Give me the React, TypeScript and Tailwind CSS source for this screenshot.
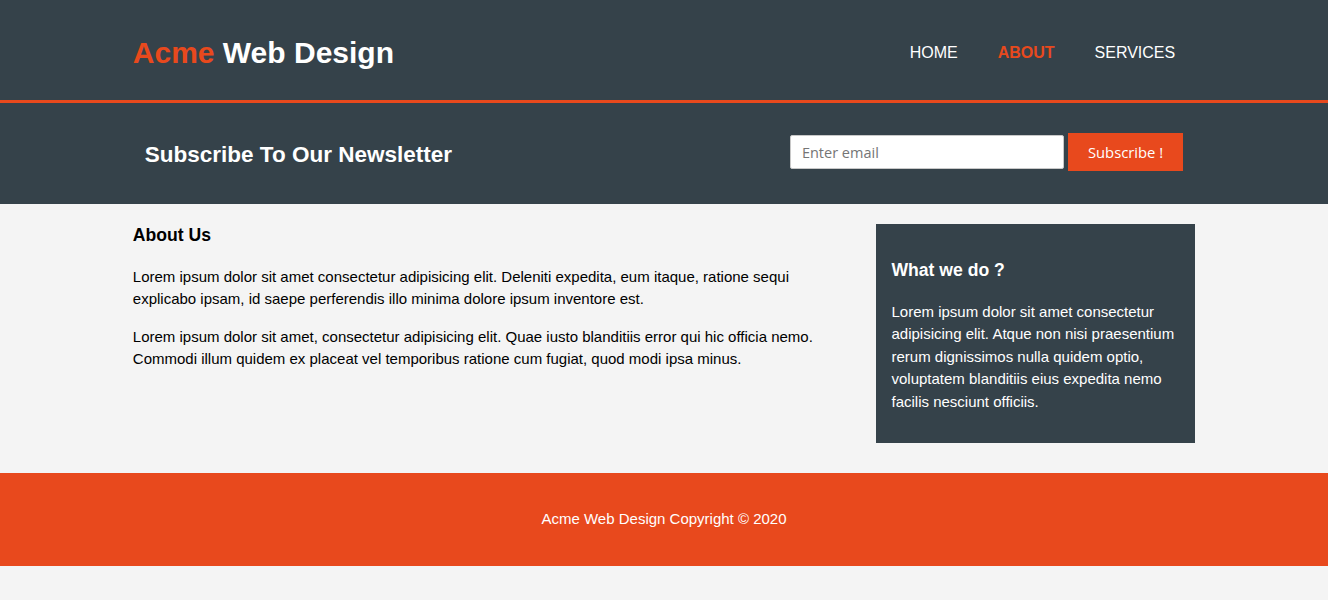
import React from "react";

const sans = { fontFamily: '"Liberation Sans", Arial, sans-serif' };
const formFont = { fontFamily: '"Open Sans", "Noto Sans", sans-serif' };

export default function App() {
  return (
    <div className="min-h-[600px] bg-[#f4f4f4] text-[15px] leading-[1.5] text-black" style={sans}>
      <header className="bg-[#35424a] pt-[30px] h-[103px] border-b-[3px] border-[#e8491d] text-white">
        <div className="w-[80%] mx-auto flex justify-between items-start">
          <h1 className="m-0 text-[30px] font-bold leading-[45px]">
            <span className="text-[#e8491d]">Acme</span> Web Design
          </h1>
          <nav className="mt-[11px]">
            <ul className="flex m-0 p-0">
              <li className="px-5 text-[16px] leading-6 uppercase">HOME</li>
              <li className="px-5 text-[16px] leading-6 uppercase font-bold text-[#e8491d]">ABOUT</li>
              <li className="px-5 text-[16px] leading-6 uppercase">SERVICES</li>
            </ul>
          </nav>
        </div>
      </header>

      <section className="bg-[#35424a] p-[15px] text-white">
        <div className="w-[80%] mx-auto flex justify-between items-start">
          <h1 className="mt-[19.8px] mb-[17.4px] text-[22.5px] font-bold leading-[33.6px]">Subscribe To Our Newsletter</h1>
          <form className="mt-[15px] flex items-center gap-[4px]" onSubmit={(e) => e.preventDefault()}>
            <input
              type="email"
              placeholder="Enter email"
              className="w-[274px] h-[34px] bg-white border border-[#c8c8c8] rounded-[2px] pl-[11px] text-[14.5px] text-black placeholder:text-[#757575] outline-none"
              style={formFont}
            />
            <button
              type="submit"
              className="h-[38px] bg-[#e8491d] px-5 text-white text-[14.8px] border-0"
              style={formFont}
            >
              Subscribe !
            </button>
          </form>
        </div>
      </section>

      <section className="pb-[30px]">
        <div className="w-[80%] mx-auto flex justify-between items-start">
          <article className="w-[65%]">
            <h1 className="mt-[18.2px] mb-[17.6px] text-[17.6px] font-bold leading-[26.4px]">About Us</h1>
            <p className="mb-[15px]">
              Lorem ipsum dolor sit amet consectetur adipisicing elit. Deleniti expedita, eum itaque, ratione sequi explicabo ipsam, id saepe perferendis illo minima dolore ipsum inventore est.
            </p>
            <p className="mb-[15px]">
              Lorem ipsum dolor sit amet, consectetur adipisicing elit. Quae iusto blanditiis error qui hic officia nemo. Commodi illum quidem ex placeat vel temporibus ratione cum fugiat, quod modi ipsa minus.
            </p>
          </article>
          <aside className="w-[30%] mt-[20px]">
            <div className="bg-[#35424a] text-white p-[15px]">
              <h3 className="mt-[18.2px] mb-[17.4px] text-[17.6px] font-bold leading-[26.4px]">What we do ?</h3>
              <p className="mb-[15px]">
                Lorem ipsum dolor sit amet consectetur adipisicing elit. Atque non nisi praesentium rerum dignissimos nulla quidem optio, voluptatem blanditiis eius expedita nemo facilis nesciunt officiis.
              </p>
            </div>
          </aside>
        </div>
      </section>

      <footer className="bg-[#e8491d] text-white text-center px-[20px] pt-[20px] pb-[20.3px]">
        <p className="my-[15px]">Acme Web Design Copyright © 2020</p>
      </footer>
    </div>
  );
}
